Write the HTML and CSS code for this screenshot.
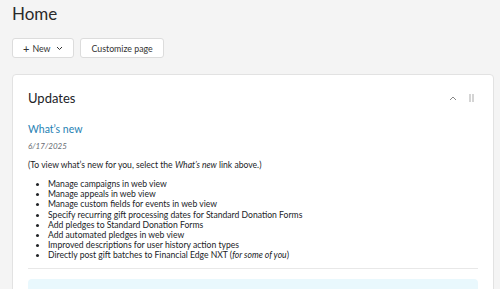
FILE: index.html
```html
<!DOCTYPE html>
<html lang="en">
<head>
    <meta charset="UTF-8">
    <title>Home</title>
    <link rel="stylesheet" href="styles.css">
</head>
<body>
    <main class="page">
        <h1 class="page-title">Home</h1>

        <div class="toolbar">
            <button class="btn">
                <span class="plus">+</span> New
                <svg class="caret" width="7" height="5" viewBox="0 0 7 5"><path d="M1 1l2.5 2.5L6 1" fill="none" stroke="#333" stroke-width="1"/></svg>
            </button>
            <button class="btn">Customize page</button>
        </div>

        <section class="tile">
            <div class="tile-header">
                <h2>Updates</h2>
                <div class="tile-tools">
                    <svg width="8" height="5" viewBox="0 0 8 5"><path d="M1 4l3-3 3 3" fill="none" stroke="#888" stroke-width="1"/></svg>
                    <svg width="5" height="8" viewBox="0 0 5 8"><path d="M1 0v8M4 0v8" stroke="#aaa" stroke-width="1"/></svg>
                </div>
            </div>

            <div class="tile-body">
                <a class="news-link" href="#">What’s new</a>
                <p class="date">6/17/2025</p>
                <p class="note">(To view what’s new for you, select the <em>What’s new</em> link above.)</p>
                <ul class="news-list">
                    <li>Manage campaigns in web view</li>
                    <li>Manage appeals in web view</li>
                    <li>Manage custom fields for events in web view</li>
                    <li>Specify recurring gift processing dates for Standard Donation Forms</li>
                    <li>Add pledges to Standard Donation Forms</li>
                    <li>Add automated pledges in web view</li>
                    <li>Improved descriptions for user history action types</li>
                    <li>Directly post gift batches to Financial Edge NXT (<em>for some of you</em>)</li>
                </ul>
                <hr class="divider">
                <div class="info-box"></div>
            </div>
        </section>
    </main>
</body>
</html>
```

FILE: styles.css
```css
body {
    margin: 0;
    background: #f4f4f4;
    font-family: Lato, Arial, sans-serif;
    color: #212327;
}
.page {
    padding: 2px 6px 0 12px;
}
.page-title {
    font-size: 17px;
    font-weight: 400;
    margin: 0;
    line-height: 24px;
    color: #2a2a2a;
}
.toolbar {
    display: flex;
    gap: 6px;
    margin-top: 12px;
}
.btn {
    display: flex;
    align-items: center;
    gap: 3px;
    height: 20px;
    padding: 0 10px;
    background: #fff;
    border: 1px solid #dcdcdc;
    border-radius: 3px;
    font-family: inherit;
    font-size: 8.8px;
    color: #333;
}
.btn .plus {
    font-size: 11px;
    line-height: 1;
}
.btn .caret {
    margin-left: 3px;
}
.tile {
    margin-top: 16px;
    background: #fff;
    border: 1px solid #e2e2e2;
    border-radius: 4px;
    padding: 0 15px;
    height: 230px;
    overflow: hidden;
}
.tile-header {
    display: flex;
    justify-content: space-between;
    align-items: center;
    height: 46px;
}
.tile-header h2 {
    font-size: 13px;
    font-weight: 400;
    margin: 0;
}
.tile-tools {
    display: flex;
    align-items: center;
    gap: 12px;
    margin-right: 4px;
}
.tile-body {
    font-size: 8.6px;
}
.news-link {
    display: block;
    color: #1f82b4;
    text-decoration: none;
    font-size: 10.5px;
    line-height: 16px;
}
.date {
    margin: 3px 0 0;
    font-size: 8px;
    font-style: italic;
    color: #686c73;
    line-height: 12px;
}
.note {
    margin: 7px 0 0;
    line-height: 12px;
}
.news-list {
    margin: 8px 0 0;
    padding-left: 20px;
    line-height: 10.2px;
}
.divider {
    border: 0;
    border-top: 1px solid #e8e8e8;
    margin: 7px 0 0;
}
.info-box {
    margin-top: 10px;
    height: 30px;
    background: #e9f8fd;
    border-radius: 4px;
}
```
